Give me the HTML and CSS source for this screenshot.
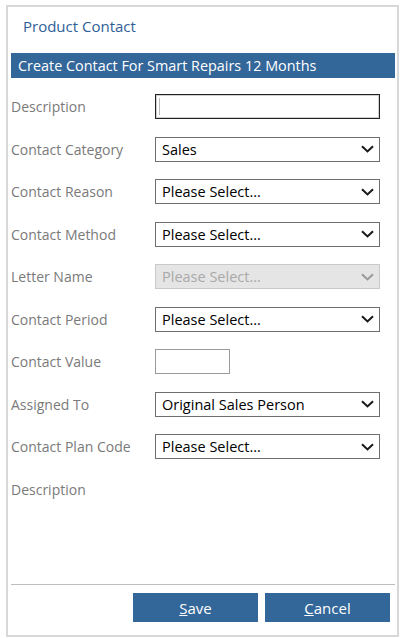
FILE: index.html
```html
<!DOCTYPE html>
<html lang="en">
<head>
<meta charset="utf-8">
<title>Product Contact</title>
<link rel="stylesheet" href="styles.css">
</head>
<body>
<div class="panel">
  <div class="title">Product Contact</div>
  <div class="bar">Create Contact For Smart Repairs 12 Months</div>
  <div class="form">
    <div class="label">Description</div>
    <div class="field input focus"><span class="caret"></span></div>

    <div class="label">Contact Category</div>
    <div class="field select"><span class="val">Sales</span><svg class="chev" viewBox="0 0 13 8" width="13" height="8"><polyline points="1,1.2 6.5,6.4 12,1.2"/></svg></div>

    <div class="label">Contact Reason</div>
    <div class="field select"><span class="val">Please Select...</span><svg class="chev" viewBox="0 0 13 8" width="13" height="8"><polyline points="1,1.2 6.5,6.4 12,1.2"/></svg></div>

    <div class="label">Contact Method</div>
    <div class="field select"><span class="val">Please Select...</span><svg class="chev" viewBox="0 0 13 8" width="13" height="8"><polyline points="1,1.2 6.5,6.4 12,1.2"/></svg></div>

    <div class="label">Letter Name</div>
    <div class="field select disabled"><span class="val">Please Select...</span><svg class="chev" viewBox="0 0 13 8" width="13" height="8"><polyline points="1,1.2 6.5,6.4 12,1.2"/></svg></div>

    <div class="label">Contact Period</div>
    <div class="field select"><span class="val">Please Select...</span><svg class="chev" viewBox="0 0 13 8" width="13" height="8"><polyline points="1,1.2 6.5,6.4 12,1.2"/></svg></div>

    <div class="label">Contact Value</div>
    <div class="field input small"></div>

    <div class="label">Assigned To</div>
    <div class="field select"><span class="val">Original Sales Person</span><svg class="chev" viewBox="0 0 13 8" width="13" height="8"><polyline points="1,1.2 6.5,6.4 12,1.2"/></svg></div>

    <div class="label">Contact Plan Code</div>
    <div class="field select"><span class="val">Please Select...</span><svg class="chev" viewBox="0 0 13 8" width="13" height="8"><polyline points="1,1.2 6.5,6.4 12,1.2"/></svg></div>

    <div class="label">Description</div>
    <div></div>
  </div>
  <div class="footer">
    <button class="btn" type="button"><u>S</u>ave</button>
    <button class="btn" type="button"><u>C</u>ancel</button>
  </div>
</div>
</body>
</html>
```

FILE: styles.css
```css
html, body {
  margin: 0;
  padding: 0;
  background: #ffffff;
}

body {
  font-family: "Open Sans", "Liberation Sans", sans-serif;
  font-size: 14px;
  color: #000;
}

.panel {
  box-sizing: border-box;
  width: 393px;
  height: 632px;
  margin: 5px 0 0 6px;
  border: 2px solid #d8d8d8;
  padding: 0 2px 0 3px;
  display: flex;
  flex-direction: column;
}

.title {
  padding: 8px 0 16px 12px;
  height: 22px;
  line-height: 22px;
  font-size: 15px;
  color: #2f5f96;
}

.bar {
  height: 25px;
  line-height: 25px;
  background: #336699;
  color: #ffffff;
  padding-left: 7px;
  font-size: 14.4px;
}

.form {
  flex: 1;
  display: grid;
  grid-template-columns: 144px 225px;
  grid-auto-rows: 25px;
  row-gap: 17.5px;
  align-items: center;
  padding-top: 16px;
}

.label {
  color: #7a7a7a;
  font-size: 14px;
  white-space: nowrap;
}

.field {
  box-sizing: border-box;
  height: 25px;
  border: 1px solid #6e6e6e;
  background: #ffffff;
  display: flex;
  align-items: center;
}

.input.focus {
  border: 1px solid #222;
  box-shadow: inset 0 0 0 1px #cfcfcf;
  padding-left: 3px;
}

.caret {
  width: 1px;
  height: 17px;
  background: #bcbcbc;
}

.input.small {
  width: 75px;
  border-color: #9a9a9a;
}

.select {
  padding: 0 5px 0 6px;
  font-size: 14.5px;
}

.val {
  flex: 1;
  white-space: nowrap;
}

.chev {
  display: block;
  fill: none;
  stroke: #1a1a1a;
  stroke-width: 2.1;
}

.select.disabled {
  background: #e5e5e5;
  border-color: #c9c9c9;
  color: #a9a9a9;
}

.select.disabled .chev {
  stroke: #9a9a9a;
}

.footer {
  border-top: 1px solid #bdbdbd;
  display: flex;
  justify-content: flex-end;
  gap: 7px;
  padding: 8px 5px 13px 0;
}

.btn {
  width: 125px;
  height: 29px;
  border: 0;
  background: #336699;
  color: #ffffff;
  font-family: "Open Sans", "Liberation Sans", sans-serif;
  font-size: 15px;
  padding: 0;
  cursor: pointer;
}
```
